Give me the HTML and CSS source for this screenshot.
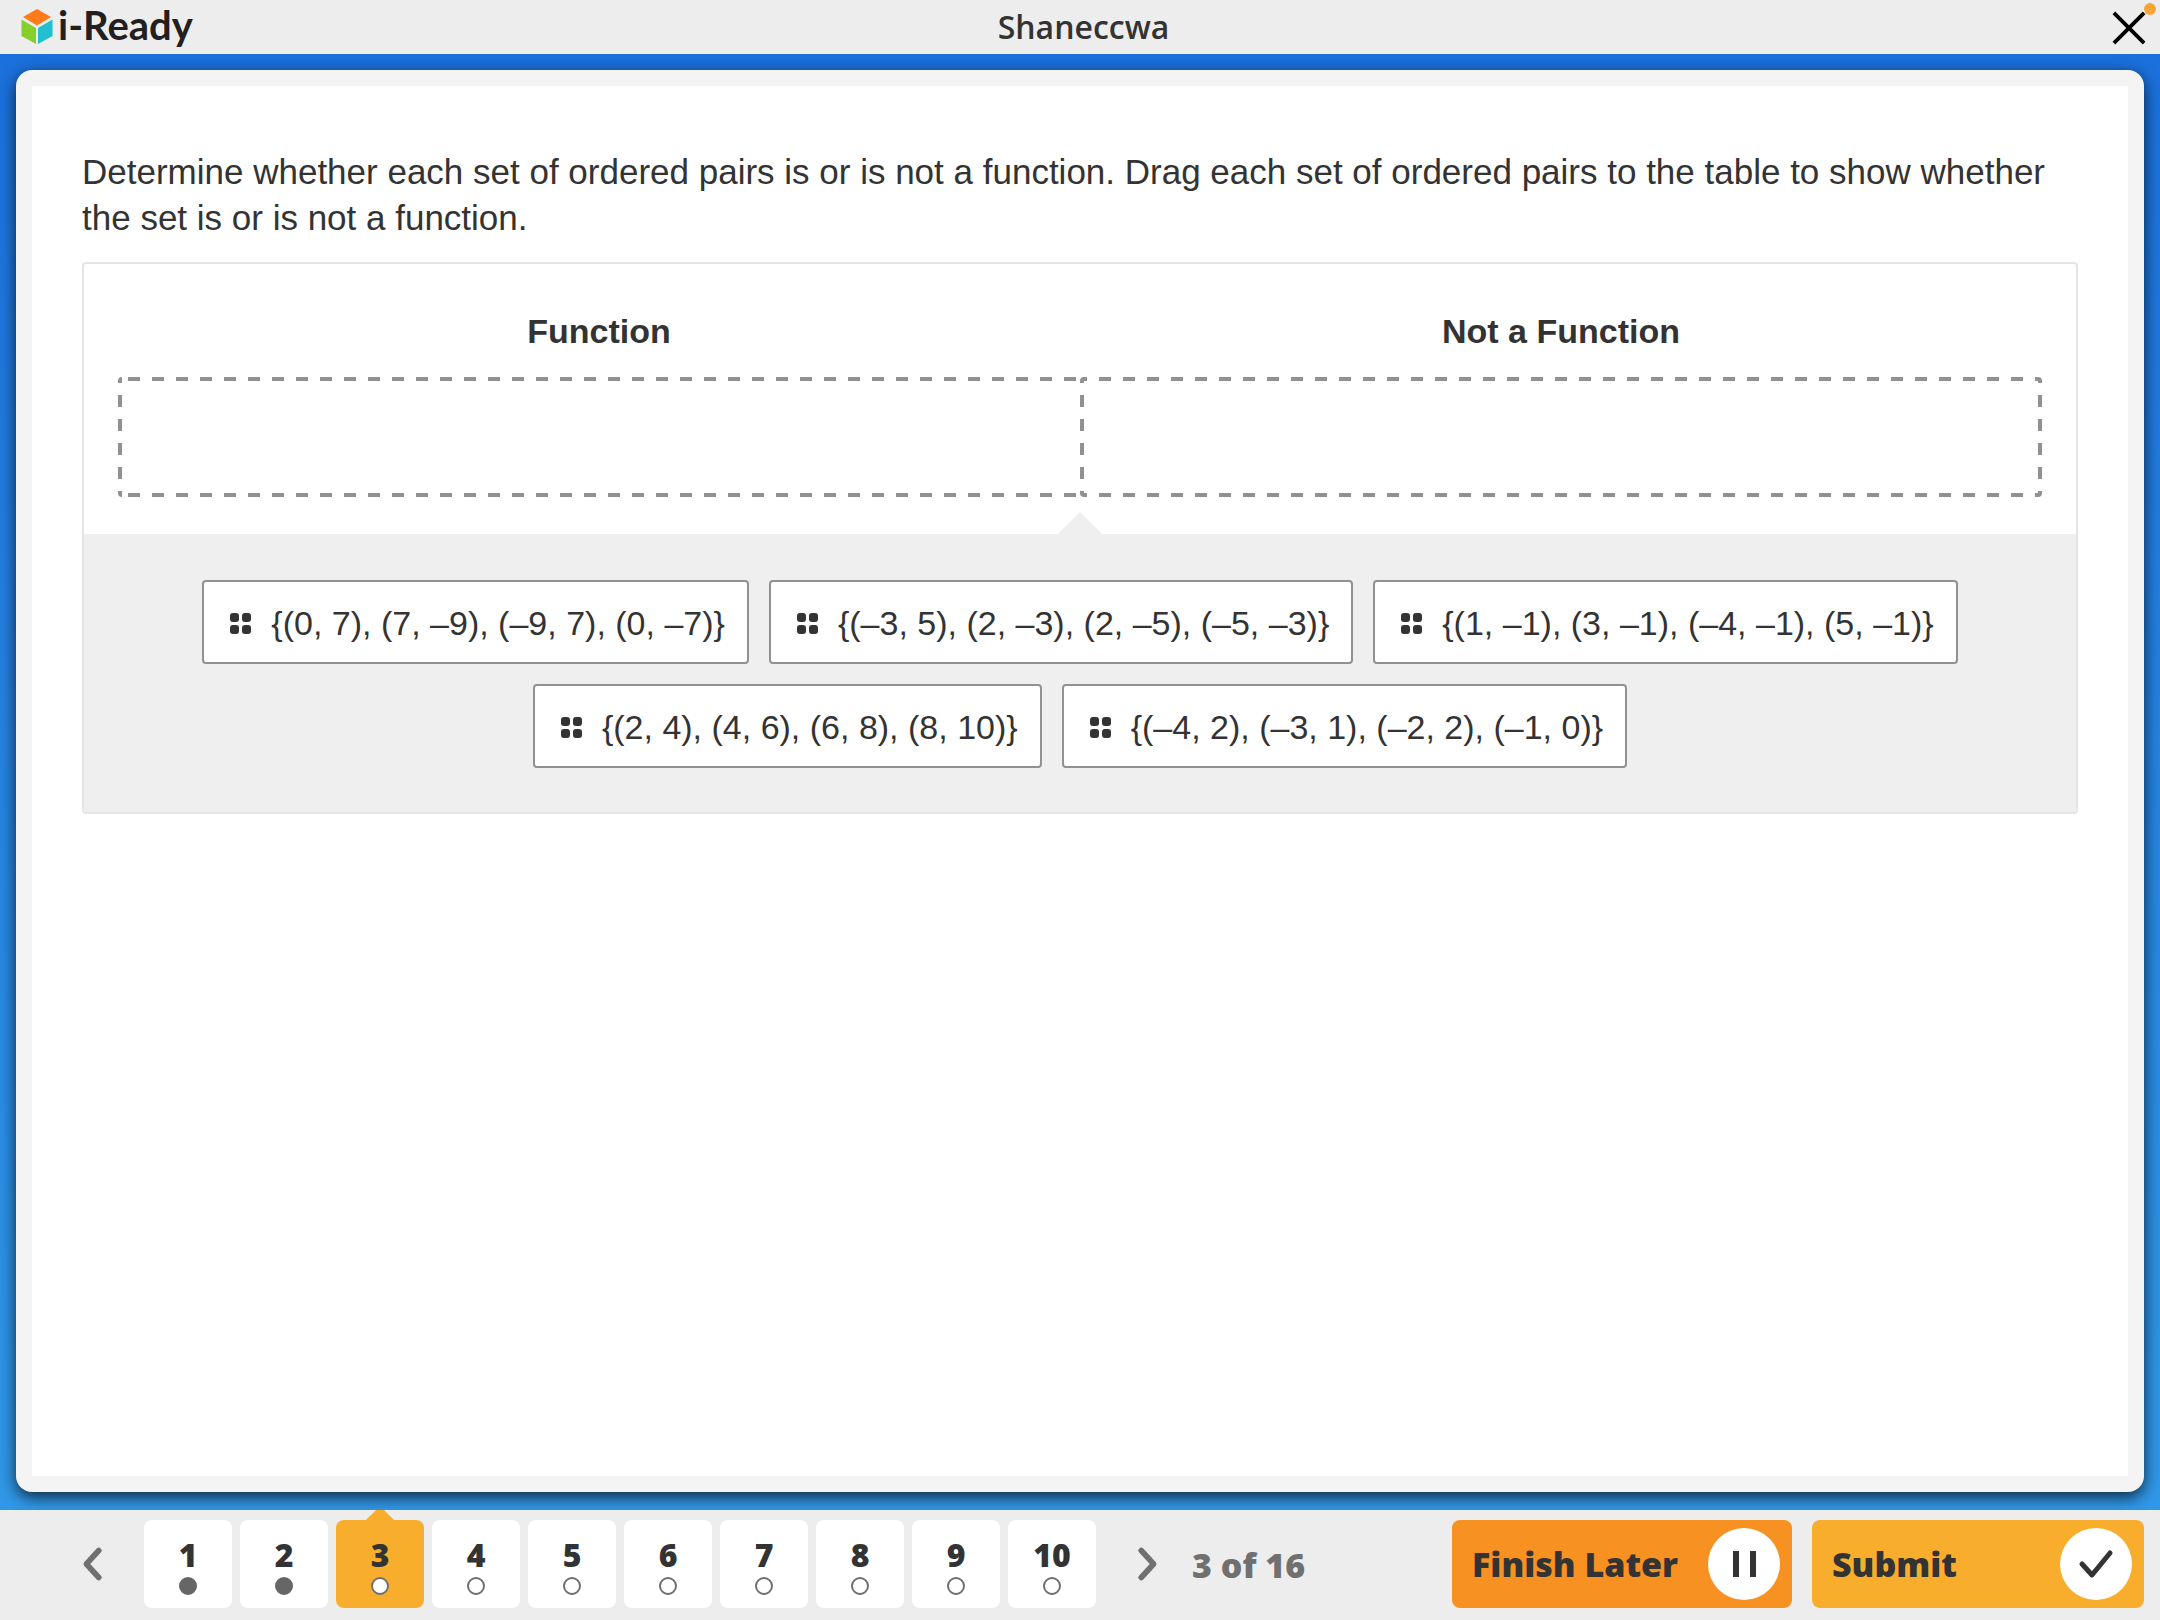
FILE: index.html
```html
<!DOCTYPE html>
<html lang="en">
<head>
    <meta charset="UTF-8">
    <meta name="viewport" content="width=device-width, initial-scale=1.0">
    <title>i-Ready</title>
    <link rel="stylesheet" href="styles.css">
</head>
<body>
    <header class="topbar">
        <a href="#" class="logo">
            <svg class="logo-cube" viewBox="0 0 32 36">
                <path fill="#ff7a1a" d="M16 0 30 8 16 16.500 2 8z"/>
                <path fill="#86d02c" d="M0.500 10.500 15 19v16L0.500 27z"/>
                <path fill="#1fc0cf" d="M31.500 10.500 17 19v16l14.500-8z"/>
            </svg>
            <span>i-Ready</span>
        </a>
        <h1 class="student">Shaneccwa</h1>
        <button class="close" aria-label="Close">
            <svg viewBox="0 0 36 36"><path d="M2 2 34 34M34 2 2 34" stroke="#000" stroke-width="4"/></svg>
            <span class="close-dot"></span>
        </button>
    </header>

    <main class="stage">
        <div class="card">
            <p class="question">Determine whether each set of ordered pairs is or is not a function. Drag each set of ordered pairs to the table to show whether the set is or is not a function.</p>
            <section class="panel">
                <div class="targets">
                    <h2>Function</h2>
                    <h2>Not a Function</h2>
                    <div class="drop drop-left"></div>
                    <div class="drop drop-right"></div>
                </div>
                <div class="choices">
                    <button class="chip"><span class="grip"><i></i><i></i><i></i><i></i></span>{(0, 7), (7, –9), (–9, 7), (0, –7)}</button>
                    <button class="chip"><span class="grip"><i></i><i></i><i></i><i></i></span>{(–3, 5), (2, –3), (2, –5), (–5, –3)}</button>
                    <button class="chip"><span class="grip"><i></i><i></i><i></i><i></i></span>{(1, –1), (3, –1), (–4, –1), (5, –1)}</button>
                    <button class="chip"><span class="grip"><i></i><i></i><i></i><i></i></span>{(2, 4), (4, 6), (6, 8), (8, 10)}</button>
                    <button class="chip"><span class="grip"><i></i><i></i><i></i><i></i></span>{(–4, 2), (–3, 1), (–2, 2), (–1, 0)}</button>
                </div>
            </section>
        </div>
    </main>

    <footer class="bottombar">
        <nav class="pager">
            <button class="arrow" aria-label="Previous">
                <svg viewBox="0 0 20 32"><path d="M16 4 5 16l11 12"/></svg>
            </button>
            <div class="pages">
                <button class="page done">1</button>
                <button class="page done">2</button>
                <button class="page current">3</button>
                <button class="page">4</button>
                <button class="page">5</button>
                <button class="page">6</button>
                <button class="page">7</button>
                <button class="page">8</button>
                <button class="page">9</button>
                <button class="page">10</button>
            </div>
            <button class="arrow" aria-label="Next">
                <svg viewBox="0 0 20 32"><path d="M4 4l11 12L4 28"/></svg>
            </button>
            <span class="count">3 of 16</span>
        </nav>
        <div class="actions">
            <button class="action later">Finish Later
                <span class="round"><svg viewBox="0 0 36 36"><path d="M10 5v26M27 5v26" stroke-width="6"/></svg></span>
            </button>
            <button class="action submit">Submit
                <span class="round"><svg viewBox="0 0 36 36"><path d="M4 18l10 11L32 7" stroke-width="5" stroke-linecap="round" stroke-linejoin="round"/></svg></span>
            </button>
        </div>
    </footer>
</body>
</html>
```
FILE: styles.css
```css
* {
    margin: 0;
    padding: 0;
    box-sizing: border-box;
}
body {
    min-height: 100vh;
    display: flex;
    flex-direction: column;
    font-family: "Liberation Sans", Arial, sans-serif;
    color: #333;
}
button {
    border: none;
    background: none;
    font: inherit;
    color: inherit;
    cursor: pointer;
}
svg {
    display: block;
    fill: none;
}

/* top bar */
.topbar {
    height: 54px;
    padding: 0 14px 0 21px;
    display: grid;
    grid-template-columns: 1fr auto 1fr;
    align-items: center;
    background: #ededed;
}
.logo {
    display: flex;
    align-items: center;
    gap: 5px;
    color: #231f20;
    text-decoration: none;
    font: 700 40px/48px Lato, sans-serif;
}
.logo span {
    padding-bottom: 4px;
}
.logo-cube {
    width: 32px;
    height: 36px;
}
.student {
    font: 600 32px/54px "Open Sans", sans-serif;
}
.close {
    position: relative;
    justify-self: end;
    padding: 2px 0 0;
}
.close svg {
    width: 34px;
    height: 34px;
}
.close-dot {
    position: absolute;
    top: -6px;
    right: -10px;
    width: 12px;
    height: 12px;
    border-radius: 50%;
    background: #f7a535;
}

/* question card */
.stage {
    flex: 1;
    display: flex;
    padding: 16px 16px 18px;
    background: linear-gradient(#1b70dc, #3098e8);
}
.card {
    flex: 1;
    padding: 63px 50px;
    border: 16px solid #f4f4f4;
    border-radius: 16px;
    background: #fff padding-box;
    box-shadow: 0 5px 16px rgba(0, 0, 0, 0.75);
}
.question {
    margin-bottom: 21px;
    font-size: 35px;
    line-height: 46px;
}
.panel {
    border: 2px solid #e5e5e5;
    border-radius: 4px;
}
.targets {
    display: grid;
    grid-template-columns: 1fr 1fr;
    row-gap: 23px;
    padding: 44px 34px 37px;
}
.targets h2 {
    font-size: 34px;
    line-height: 46px;
    text-align: center;
}
.drop {
    --dash: #919191 50%, transparent 0;
    height: 120px;
}
.drop-left {
    border-radius: 4px 0 0 4px;
    background:
        linear-gradient(90deg, var(--dash)) 10px 0 / 24px 4px repeat-x,
        linear-gradient(90deg, var(--dash)) 10px 100% / 24px 4px repeat-x,
        linear-gradient(var(--dash)) 0 18px / 4px 24px repeat-y;
}
.drop-right {
    border-radius: 4px;
    background:
        linear-gradient(90deg, var(--dash)) 19px 0 / 24px 4px repeat-x,
        linear-gradient(90deg, var(--dash)) 19px 100% / 24px 4px repeat-x,
        linear-gradient(var(--dash)) 0 18px / 4px 24px repeat-y,
        linear-gradient(var(--dash)) 100% 18px / 4px 24px repeat-y;
}
.choices {
    position: relative;
    display: flex;
    flex-wrap: wrap;
    justify-content: center;
    gap: 20px;
    padding: 46px 100px 44px;
    background: #efefef;
}
.choices::before {
    content: "";
    position: absolute;
    top: -22px;
    left: calc(50% - 22px);
    width: 44px;
    height: 22px;
    background: #efefef;
    clip-path: polygon(50% 0, 100% 100%, 0 100%);
}
.chip {
    display: flex;
    align-items: center;
    height: 84px;
    padding: 2px 22px 0 26px;
    border: 2px solid #919191;
    border-radius: 4px;
    background: #fff;
    font-size: 34px;
}
.grip {
    display: grid;
    grid-template-columns: 9px 9px;
    gap: 3px;
    margin-right: 20px;
}
.grip i {
    height: 9px;
    border-radius: 3px;
    background: #333;
}

/* bottom bar */
.bottombar {
    display: flex;
    justify-content: space-between;
    align-items: center;
    padding: 10px 16px 12px 80px;
    background: #ededed;
    font: 800 34px/44px "Open Sans", sans-serif;
}
.pager,
.pages,
.actions {
    display: flex;
    align-items: center;
}
.arrow svg {
    width: 24px;
    height: 36px;
    stroke: #707070;
    stroke-width: 5px;
    stroke-linecap: round;
    stroke-linejoin: round;
}
.pages {
    gap: 8px;
    margin: 0 40px;
}
.page {
    position: relative;
    width: 88px;
    height: 88px;
    border-radius: 8px;
    background: #fff;
    font-size: 32px;
    line-height: 44px;
}
.page::after {
    content: "";
    display: block;
    width: 14px;
    height: 14px;
    margin: 0 auto;
    border: 2px solid #707070;
    border-radius: 50%;
    background: #fff;
}
.page.done::after {
    background: #666;
    border-color: #666;
}
.page.current {
    background: #f8ae2c;
}
.page.current::before {
    content: "";
    position: absolute;
    top: -10px;
    left: 30px;
    width: 28px;
    height: 10px;
    background: #f8ae2c;
    clip-path: polygon(36% 0, 64% 0, 100% 100%, 0 100%);
}
.count {
    margin-left: 32px;
    padding-top: 2px;
    color: #707070;
}
.actions {
    gap: 20px;
}
.action {
    display: flex;
    justify-content: space-between;
    align-items: center;
    height: 88px;
    padding: 0 12px 0 20px;
    border-radius: 8px;
}
.later {
    width: 340px;
    background: #f79122;
}
.submit {
    width: 332px;
    background: #f8ae2c;
}
.round {
    display: grid;
    place-items: center;
    width: 72px;
    height: 72px;
    border-radius: 50%;
    background: #fff;
}
.round svg {
    width: 36px;
    height: 36px;
    stroke: #333;
}
```
